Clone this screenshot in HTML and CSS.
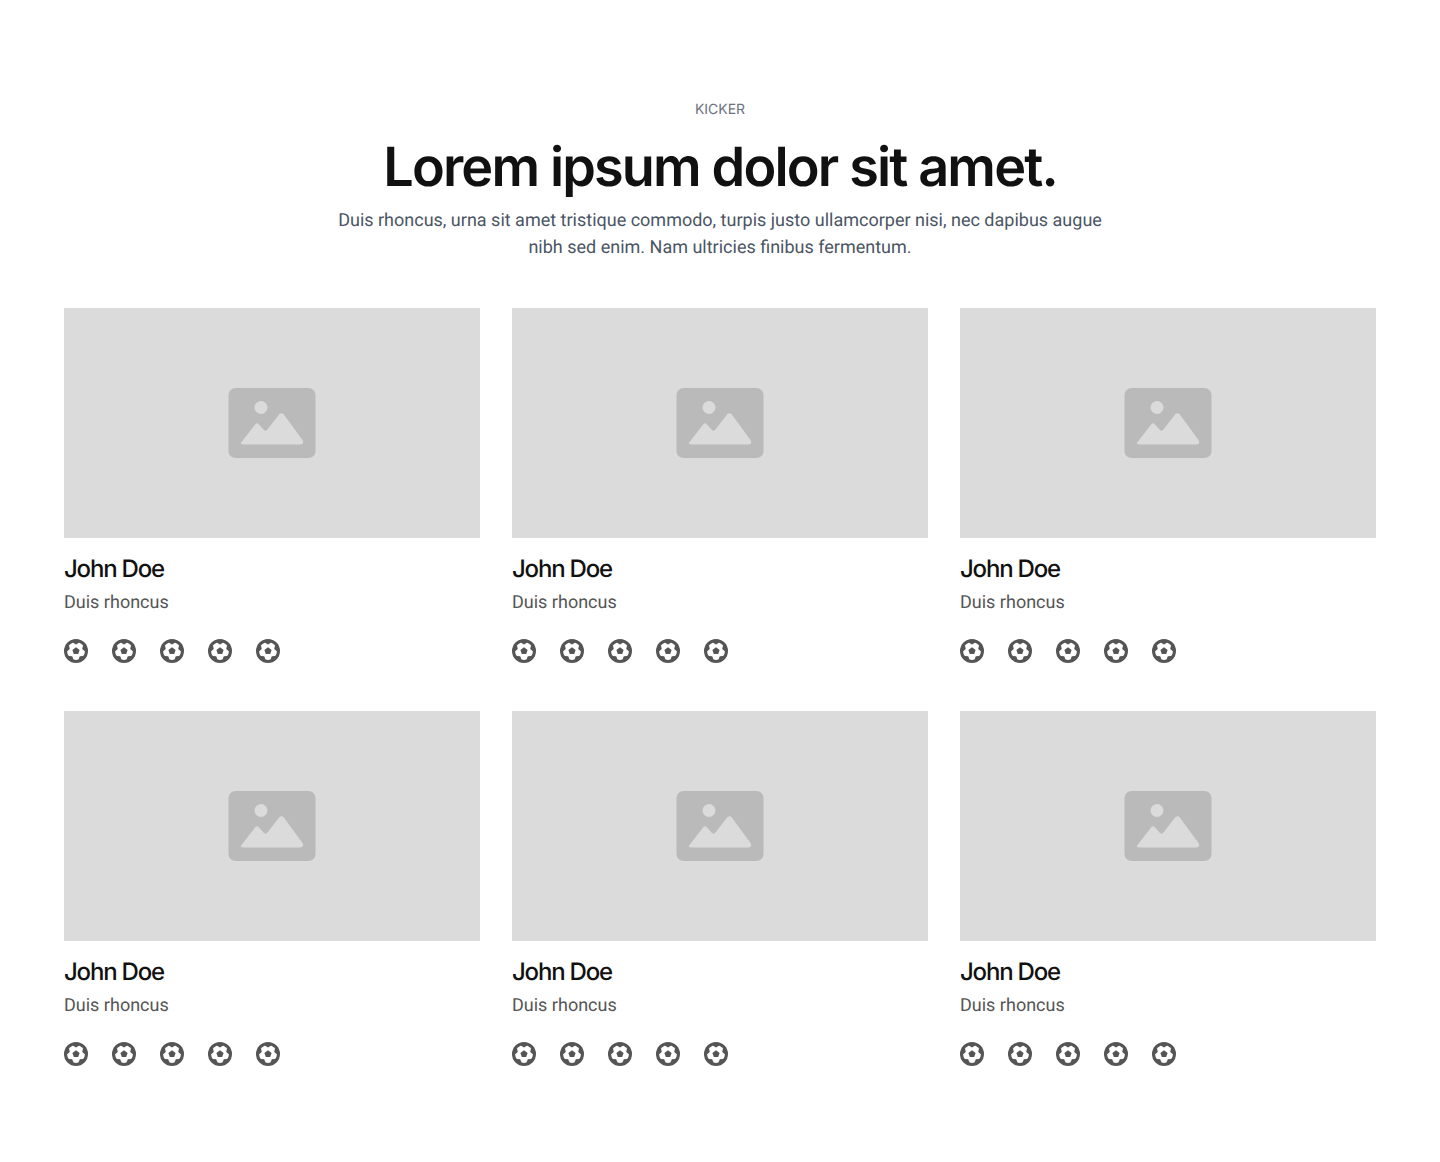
FILE: index.html
```html
<!DOCTYPE html>
<html lang="en">
<head>
    <meta charset="UTF-8">
    <meta name="viewport" content="width=device-width, initial-scale=1.0">
    <title>Team</title>
    <link rel="stylesheet" href="styles.css">
</head>
<body>
    <svg class="sprites" width="0" height="0" aria-hidden="true">
        <symbol id="picture" viewBox="-0.5 0 88 70">
            <rect width="87" height="70" rx="7" fill="#bababa"/>
            <circle cx="32.5" cy="19.5" r="6.5" fill="#dbdbdb"/>
            <path d="M13 54 L27 36 Q28.500 34.500 30 36 L35.500 42 Q37 43.500 38.500 42 L51 26 Q53 24.500 55 26 L74 52 Q76 56 72 56.500 H15 Q11 56 13 54 Z" fill="#dbdbdb"/>
        </symbol>
        <symbol id="ball" viewBox="0 0 24 24">
            <circle cx="12" cy="12" r="12" fill="#555"/>
            <circle cx="12" cy="12" r="9" fill="#fff"/>
            <path d="M6.800 2.300 L12 5.500 L17.200 2.300 Z M19.600 4.100 L18.200 10 L22.800 13.900 Z M21.900 16.800 L15.800 17.300 L13.500 22.900 Z M10.500 22.900 L8.200 17.300 L2.100 16.800 Z M1.200 13.900 L5.800 10 L4.400 4.100 Z" fill="#555"/>
            <path d="M12 8.300 L15.600 10.900 L14.200 15 H9.800 L8.400 10.900 Z" fill="#555"/>
        </symbol>
    </svg>

    <main class="section">
        <header class="intro">
            <p class="kicker">Kicker</p>
            <h1>Lorem ipsum dolor sit amet.</h1>
            <p class="lead">Duis rhoncus, urna sit amet tristique commodo, turpis justo ullamcorper nisi, nec dapibus augue nibh sed enim. Nam ultricies finibus fermentum.</p>
        </header>

        <div class="people" id="people"></div>
    </main>

    <template id="personCard">
        <article class="person">
            <div class="photo"><svg width="88" height="70"><use href="#picture"/></svg></div>
            <h2>John Doe</h2>
            <p class="role">Duis rhoncus</p>
            <div class="socials">
                <svg width="24" height="24"><use href="#ball"/></svg>
                <svg width="24" height="24"><use href="#ball"/></svg>
                <svg width="24" height="24"><use href="#ball"/></svg>
                <svg width="24" height="24"><use href="#ball"/></svg>
                <svg width="24" height="24"><use href="#ball"/></svg>
            </div>
        </article>
    </template>

    <script>
        const people = document.getElementById("people");
        const personCard = document.getElementById("personCard");

        for (let i = 0; i < 6; i++) {
            people.appendChild(personCard.content.cloneNode(true));
        }
    </script>
</body>
</html>
```

FILE: styles.css
```css
body {
    margin: 0;
    background-color: #ffffff;
    font-family: Roboto, sans-serif;
    text-rendering: geometricPrecision;
}
.sprites {
    position: absolute;
}
.section {
    padding: 101px 64px 84px;
}
.intro {
    text-align: center;
    margin-bottom: 47px;
}
.kicker {
    margin: 0;
    font-family: Inter, sans-serif;
    font-size: 14px;
    line-height: 18px;
    color: #6b7280;
    text-transform: uppercase;
}
h1 {
    margin: 17px 0 0;
    font-family: Inter, sans-serif;
    font-size: 54px;
    font-weight: 600;
    line-height: 64px;
    letter-spacing: -1.85px;
    color: #111111;
}
.lead {
    width: 800px;
    margin: 7px auto 0;
    font-size: 18px;
    line-height: 27px;
    color: #4b5563;
}
.people {
    display: grid;
    grid-template-columns: repeat(3, 1fr);
    gap: 48px 32px;
}
.photo {
    display: flex;
    align-items: center;
    justify-content: center;
    height: 230px;
    background-color: #dbdbdb;
}
h2 {
    margin: 16px 0 0;
    font-family: Inter, sans-serif;
    font-size: 24px;
    font-weight: 500;
    line-height: 30px;
    letter-spacing: -1.2px;
    color: #111111;
}
.role {
    margin: 5px 0 0;
    font-size: 18px;
    line-height: 27px;
    color: #555555;
}
.socials {
    display: flex;
    gap: 24px;
    margin-top: 23px;
}
```
